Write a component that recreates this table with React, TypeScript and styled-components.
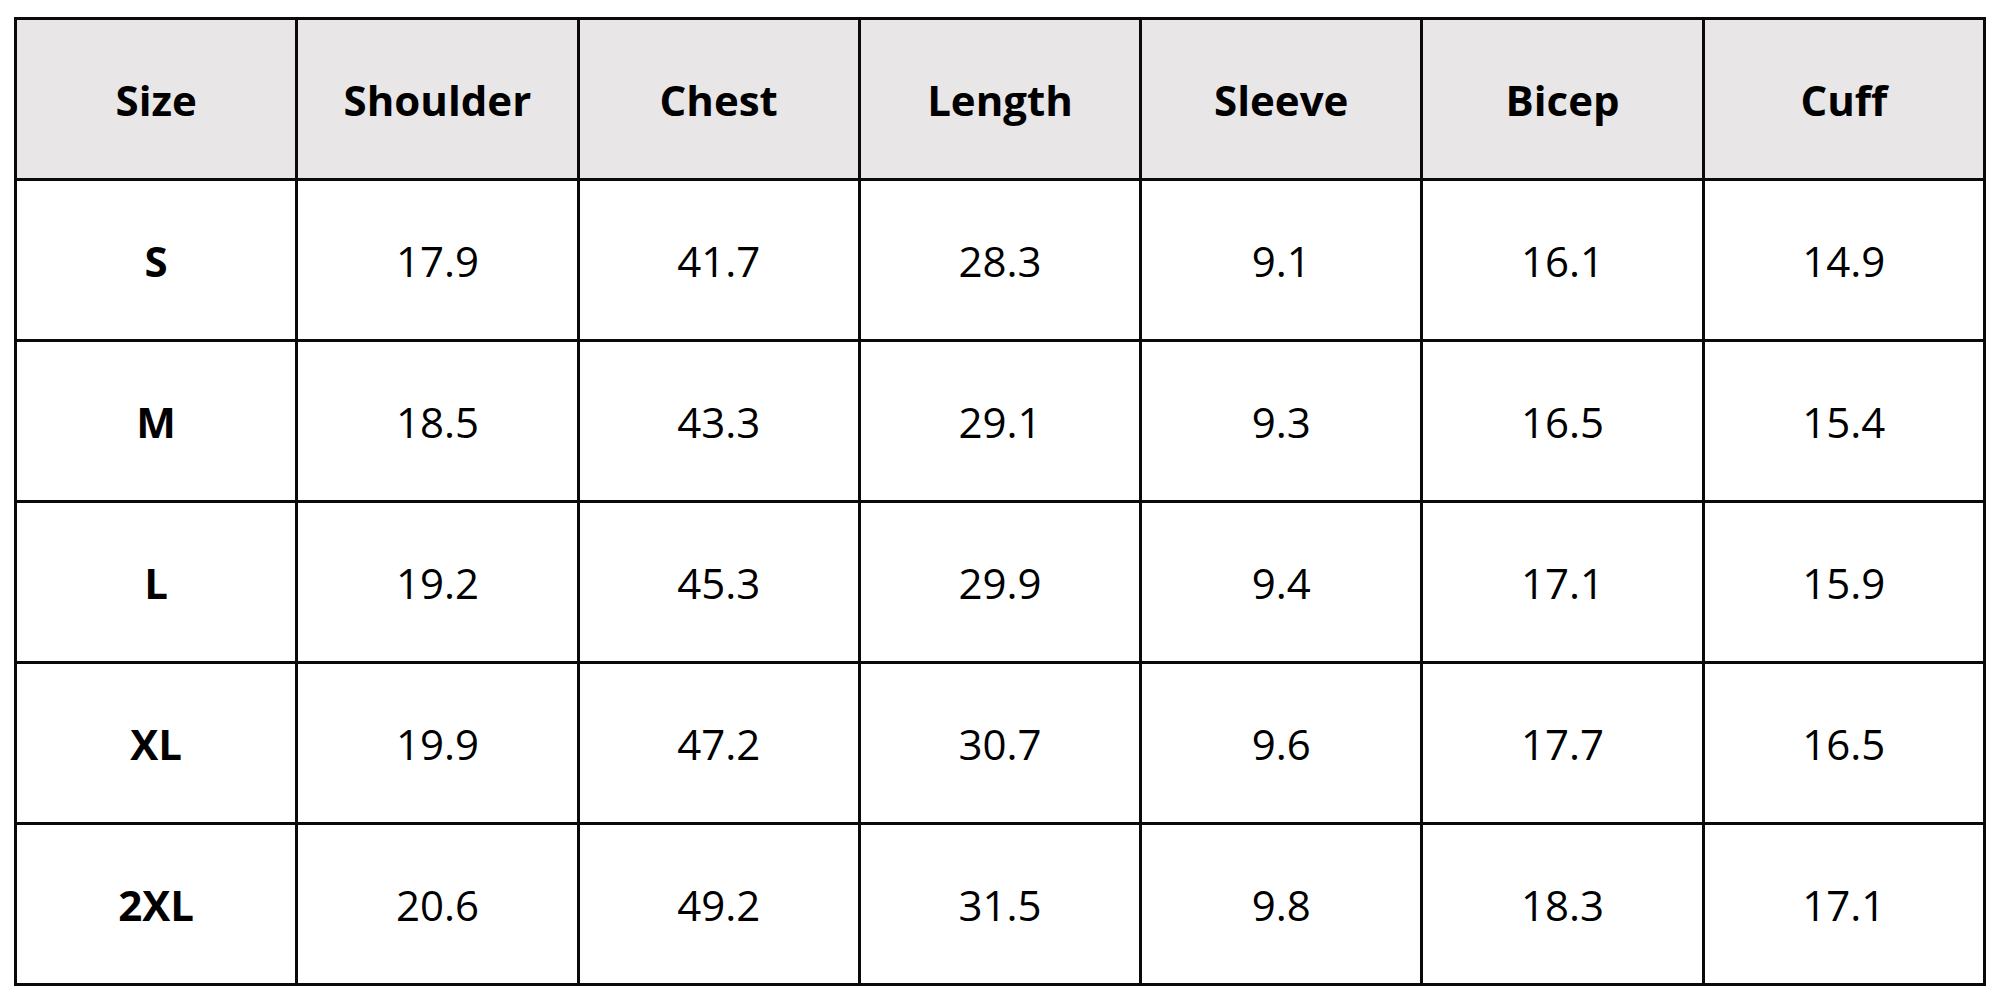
import styled, { createGlobalStyle } from 'styled-components';

const GlobalStyle = createGlobalStyle`
  html, body {
    margin: 0;
    padding: 0;
    background: #ffffff;
  }
`;

const Page = styled.div`
  width: 2000px;
  height: 1000px;
  box-sizing: border-box;
  padding: 17px 14px 0 14px;
  font-family: 'Open Sans', Lato, sans-serif;
  color: #000000;
`;

const Table = styled.table`
  width: 1972px;
  border-collapse: collapse;
  table-layout: fixed;
`;

const HeadCell = styled.th`
  height: 158px;
  padding: 0;
  border: 3px solid #0a0a0a;
  background: #e8e6e7;
  font-size: 42px;
  font-weight: 700;
  text-align: center;
  vertical-align: middle;
`;

const Cell = styled.td<{ $bold?: boolean }>`
  height: 158px;
  padding: 0;
  border: 3px solid #0a0a0a;
  font-size: 42px;
  font-weight: ${(p) => (p.$bold ? 700 : 400)};
  text-align: center;
  vertical-align: middle;
`;

const COLUMNS = ['Size', 'Shoulder', 'Chest', 'Length', 'Sleeve', 'Bicep', 'Cuff'];

const ROWS = [
  ['S', '17.9', '41.7', '28.3', '9.1', '16.1', '14.9'],
  ['M', '18.5', '43.3', '29.1', '9.3', '16.5', '15.4'],
  ['L', '19.2', '45.3', '29.9', '9.4', '17.1', '15.9'],
  ['XL', '19.9', '47.2', '30.7', '9.6', '17.7', '16.5'],
  ['2XL', '20.6', '49.2', '31.5', '9.8', '18.3', '17.1'],
];

const App = () => (
  <>
    <GlobalStyle />
    <Page>
      <Table>
        <thead>
          <tr>
            {COLUMNS.map((c) => (
              <HeadCell key={c}>{c}</HeadCell>
            ))}
          </tr>
        </thead>
        <tbody>
          {ROWS.map((row) => (
            <tr key={row[0]}>
              {row.map((v, i) => (
                <Cell key={i} $bold={i === 0}>
                  {v}
                </Cell>
              ))}
            </tr>
          ))}
        </tbody>
      </Table>
    </Page>
  </>
);

export default App;
